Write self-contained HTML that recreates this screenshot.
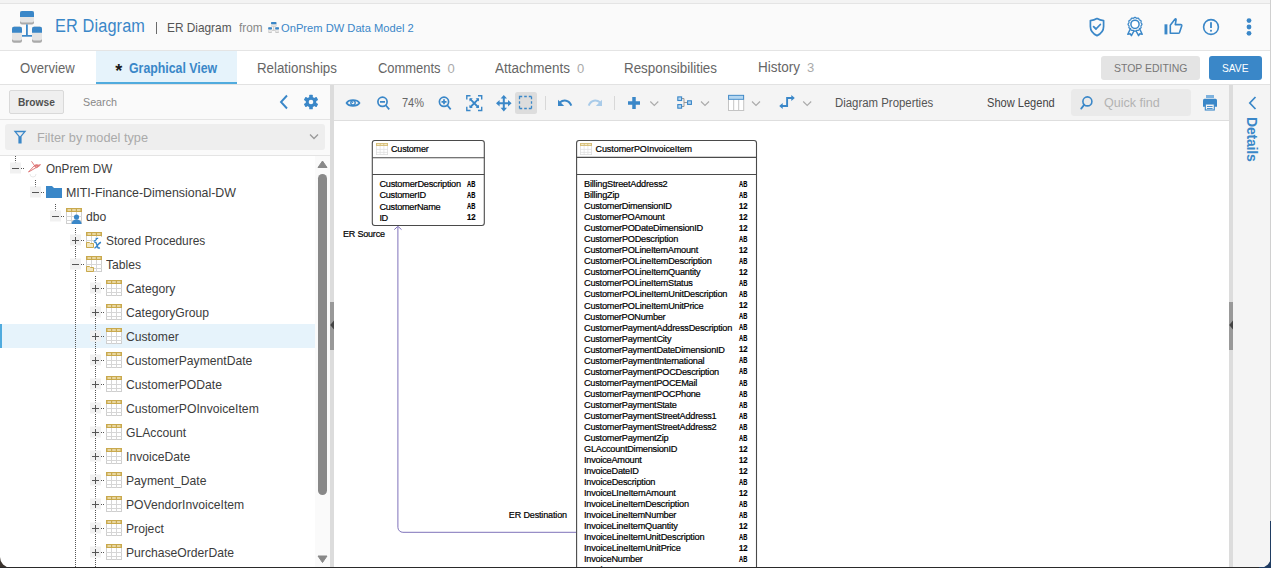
<!DOCTYPE html>
<html><head><meta charset="utf-8">
<style>
*{box-sizing:border-box;margin:0;padding:0}
html,body{width:1271px;height:568px;overflow:hidden;background:#fff;font-family:"Liberation Sans",sans-serif;color:#555;position:relative}
.a{position:absolute}
.t{position:absolute;white-space:nowrap;line-height:1}
svg{position:absolute;overflow:visible}
.ti{position:absolute;width:16px;height:16px}
</style></head><body>
<div class="a" style="left:0;top:0;width:1271px;height:3px;background:#f3f3f3"></div>
<div class="a" style="left:0;top:3px;width:1271px;height:1px;background:#e4e4e4"></div>
<div class="a" style="left:0;top:4px;width:1271px;height:46px;background:#fafafa"></div>
<div class="a" style="left:0;top:50px;width:1271px;height:1px;background:#e4e4e4"></div>
<div class="a" style="left:0;top:51px;width:1271px;height:33px;background:#fff"></div>
<div class="a" style="left:96px;top:51px;width:141px;height:33px;background:#e6f3fb"></div>
<div class="a" style="left:96px;top:82px;width:141px;height:2px;background:#50abde"></div>
<div class="a" style="left:0;top:84px;width:1271px;height:1px;background:#e2e2e2"></div>
<div class="a" style="left:0;top:85px;width:330px;height:34px;background:#fafafa"></div>
<div class="a" style="left:0;top:119px;width:330px;height:1px;background:#e4e4e4"></div>
<div class="a" style="left:0;top:120px;width:330px;height:35px;background:#fafafa"></div>
<div class="a" style="left:5px;top:124px;width:320px;height:26px;background:#eeeeee;border-radius:3px"></div>
<div class="a" style="left:0;top:155px;width:330px;height:1px;background:#e4e4e4"></div>
<div class="a" style="left:315px;top:156px;width:15px;height:412px;background:#fafafa"></div>
<div class="a" style="left:330px;top:85px;width:4px;height:483px;background:#dcdcdc"></div>
<div class="a" style="left:330px;top:302px;width:4px;height:48px;background:#999"></div>
<div class="a" style="left:1229px;top:85px;width:4px;height:483px;background:#dcdcdc"></div>
<div class="a" style="left:1229px;top:302px;width:4px;height:48px;background:#999"></div>
<div class="a" style="left:334px;top:85px;width:895px;height:35px;background:#f4f4f4"></div>
<div class="a" style="left:334px;top:120px;width:895px;height:1px;background:#dedede"></div>
<div class="a" style="left:1233px;top:85px;width:38px;height:483px;background:#f4f4f4"></div>
<div class="a" style="left:1270px;top:0;width:1px;height:568px;background:#d0d0d0"></div>
<svg style="left:0;top:0" width="60" height="50">
<rect x="20" y="11" width="14" height="13.4" rx="2" fill="#a9a9a9"/>
<rect x="20" y="11" width="14" height="11.5" rx="2" fill="#e4e4e4"/>
<path d="M22 11h10a2 2 0 0 1 2 2v4h-14v-4a2 2 0 0 1 2-2z" fill="#3a87c8"/>
<rect x="12" y="26.8" width="10" height="15.9" rx="2" fill="#a9a9a9"/>
<rect x="12" y="26.8" width="10" height="13.8" rx="2" fill="#e4e4e4"/>
<path d="M14 26.8h6a2 2 0 0 1 2 2v4h-10v-4a2 2 0 0 1 2-2z" fill="#3a87c8"/>
<rect x="32" y="26.8" width="10" height="15.9" rx="2" fill="#a9a9a9"/>
<rect x="32" y="26.8" width="10" height="13.8" rx="2" fill="#e4e4e4"/>
<path d="M34 26.8h6a2 2 0 0 1 2 2v4h-10v-4a2 2 0 0 1 2-2z" fill="#3a87c8"/>
<rect x="26" y="24.4" width="1.8" height="11.5" fill="#3a87c8"/>
<rect x="22" y="35" width="10" height="1.7" fill="#3a87c8"/>
</svg>
<div class="a" style="left:156px;top:22px;width:1px;height:12px;background:#6a6a6a"></div>
<svg style="left:262px;top:18px" width="20" height="18">
<rect x="9" y="4" width="5.4" height="4.6" rx="0.8" fill="#b5b5b5"/><rect x="9" y="4" width="5.4" height="4" rx="0.8" fill="#e6e6e6"/><rect x="9" y="4" width="5.4" height="2.2" rx="0.8" fill="#3a87c8"/>
<rect x="6.2" y="9.2" width="3.8" height="5.6" rx="0.8" fill="#b5b5b5"/><rect x="6.2" y="9.2" width="3.8" height="4.8" rx="0.8" fill="#e6e6e6"/><rect x="6.2" y="9.2" width="3.8" height="2.3" rx="0.8" fill="#3a87c8"/>
<rect x="13.2" y="9.2" width="3.8" height="5.6" rx="0.8" fill="#b5b5b5"/><rect x="13.2" y="9.2" width="3.8" height="4.8" rx="0.8" fill="#e6e6e6"/><rect x="13.2" y="9.2" width="3.8" height="2.3" rx="0.8" fill="#3a87c8"/>
<path d="M11.7 8.6V12.3M10 12.3H13.2" stroke="#bbb" stroke-width="0.8"/>
</svg>
<div class="a" style="left:1101px;top:56px;width:99px;height:24px;background:#e4e4e4;border-radius:3px"></div>
<div class="a" style="left:1209px;top:56px;width:53px;height:24px;background:#3a87c8;border-radius:3px"></div>
<svg style="left:1088px;top:17px" width="18" height="20" viewBox="0 0 18 20">
<path d="M9 1.6 C6.5 3 4.5 3.4 2.4 3.6 V9.5 C2.4 14 5 16.8 9 18.6 C13 16.8 15.6 14 15.6 9.5 V3.6 C13.5 3.4 11.5 3 9 1.6z" fill="none" stroke="#3a87c8" stroke-width="1.7" stroke-linejoin="round"/>
<path d="M5.6 9.6 L8 12 L12.3 7.5" fill="none" stroke="#3a87c8" stroke-width="1.8" stroke-linecap="round" stroke-linejoin="round"/>
</svg>
<svg style="left:1126px;top:16px" width="18" height="22" viewBox="0 0 18 22">
<path d="M4.5 12.5 L1.8 18.2 L4.3 17.8 L5.4 19.6 L8.2 14.5" fill="none" stroke="#3a87c8" stroke-width="1.5" stroke-linejoin="round"/>
<path d="M13.5 12.5 L16.2 18.2 L13.7 17.8 L12.6 19.6 L9.8 14.5" fill="none" stroke="#3a87c8" stroke-width="1.5" stroke-linejoin="round"/>
<path d="M9.00 1.35 L9.18 1.37 L9.36 1.43 L9.53 1.52 L9.70 1.63 L9.86 1.76 L10.02 1.89 L10.17 2.01 L10.31 2.12 L10.46 2.21 L10.62 2.26 L10.78 2.29 L10.95 2.29 L11.13 2.27 L11.33 2.24 L11.53 2.20 L11.73 2.17 L11.93 2.16 L12.12 2.17 L12.31 2.21 L12.47 2.28 L12.62 2.39 L12.75 2.53 L12.85 2.69 L12.94 2.87 L13.02 3.06 L13.09 3.25 L13.15 3.44 L13.23 3.61 L13.31 3.75 L13.42 3.88 L13.55 3.99 L13.69 4.07 L13.86 4.15 L14.05 4.21 L14.24 4.28 L14.43 4.36 L14.61 4.45 L14.77 4.55 L14.91 4.68 L15.02 4.83 L15.09 4.99 L15.13 5.18 L15.14 5.37 L15.13 5.57 L15.10 5.77 L15.06 5.97 L15.03 6.17 L15.01 6.35 L15.01 6.52 L15.04 6.68 L15.09 6.84 L15.18 6.99 L15.29 7.13 L15.41 7.28 L15.54 7.44 L15.67 7.60 L15.78 7.77 L15.87 7.94 L15.93 8.12 L15.95 8.30 L15.93 8.48 L15.87 8.66 L15.78 8.83 L15.67 9.00 L15.54 9.16 L15.41 9.32 L15.29 9.47 L15.18 9.61 L15.09 9.76 L15.04 9.92 L15.01 10.08 L15.01 10.25 L15.03 10.43 L15.06 10.63 L15.10 10.83 L15.13 11.03 L15.14 11.23 L15.13 11.42 L15.09 11.61 L15.02 11.77 L14.91 11.92 L14.77 12.05 L14.61 12.15 L14.43 12.24 L14.24 12.32 L14.05 12.39 L13.86 12.45 L13.69 12.53 L13.55 12.61 L13.42 12.72 L13.31 12.85 L13.23 12.99 L13.15 13.16 L13.09 13.35 L13.02 13.54 L12.94 13.73 L12.85 13.91 L12.75 14.07 L12.62 14.21 L12.47 14.32 L12.31 14.39 L12.12 14.43 L11.93 14.44 L11.73 14.43 L11.53 14.40 L11.33 14.36 L11.13 14.33 L10.95 14.31 L10.78 14.31 L10.62 14.34 L10.46 14.39 L10.31 14.48 L10.17 14.59 L10.02 14.71 L9.86 14.84 L9.70 14.97 L9.53 15.08 L9.36 15.17 L9.18 15.23 L9.00 15.25 L8.82 15.23 L8.64 15.17 L8.47 15.08 L8.30 14.97 L8.14 14.84 L7.98 14.71 L7.83 14.59 L7.69 14.48 L7.54 14.39 L7.38 14.34 L7.22 14.31 L7.05 14.31 L6.87 14.33 L6.67 14.36 L6.47 14.40 L6.27 14.43 L6.07 14.44 L5.88 14.43 L5.69 14.39 L5.53 14.32 L5.38 14.21 L5.25 14.07 L5.15 13.91 L5.06 13.73 L4.98 13.54 L4.91 13.35 L4.85 13.16 L4.77 12.99 L4.69 12.85 L4.58 12.72 L4.45 12.61 L4.31 12.53 L4.14 12.45 L3.95 12.39 L3.76 12.32 L3.57 12.24 L3.39 12.15 L3.23 12.05 L3.09 11.92 L2.98 11.78 L2.91 11.61 L2.87 11.42 L2.86 11.23 L2.87 11.03 L2.90 10.83 L2.94 10.63 L2.97 10.43 L2.99 10.25 L2.99 10.08 L2.96 9.92 L2.91 9.76 L2.82 9.61 L2.71 9.47 L2.59 9.32 L2.46 9.16 L2.33 9.00 L2.22 8.83 L2.13 8.66 L2.07 8.48 L2.05 8.30 L2.07 8.12 L2.13 7.94 L2.22 7.77 L2.33 7.60 L2.46 7.44 L2.59 7.28 L2.71 7.13 L2.82 6.99 L2.91 6.84 L2.96 6.68 L2.99 6.52 L2.99 6.35 L2.97 6.17 L2.94 5.97 L2.90 5.77 L2.87 5.57 L2.86 5.37 L2.87 5.18 L2.91 4.99 L2.98 4.83 L3.09 4.68 L3.23 4.55 L3.39 4.45 L3.57 4.36 L3.76 4.28 L3.95 4.21 L4.14 4.15 L4.31 4.07 L4.45 3.99 L4.58 3.88 L4.69 3.75 L4.77 3.61 L4.85 3.44 L4.91 3.25 L4.98 3.06 L5.06 2.87 L5.15 2.69 L5.25 2.53 L5.38 2.39 L5.53 2.28 L5.69 2.21 L5.88 2.17 L6.07 2.16 L6.27 2.17 L6.47 2.20 L6.67 2.24 L6.87 2.27 L7.05 2.29 L7.22 2.29 L7.38 2.26 L7.54 2.21 L7.69 2.12 L7.83 2.01 L7.98 1.89 L8.14 1.76 L8.30 1.63 L8.47 1.52 L8.64 1.43 L8.82 1.37 L9.00 1.35Z" fill="#fafafa" stroke="#3a87c8" stroke-width="1.25"/>
<circle cx="9" cy="8.3" r="4.1" fill="#fff" stroke="#3a87c8" stroke-width="1.5"/>
</svg>
<svg style="left:1162.5px;top:17px" width="22" height="19" viewBox="0 0 22 19">
<rect x="1.5" y="7.3" width="2.9" height="10.1" fill="#3a87c8"/>
<path d="M7.3 8.3 L11.9 2.3 Q12.9 1.1 13.1 2.6 L12.3 7.6 H17.7 Q19.1 7.6 18.7 9 L16.5 15.5 Q16.2 16.3 15.3 16.3 H7.3 Z" fill="none" stroke="#3a87c8" stroke-width="1.6" stroke-linejoin="round"/>
</svg>
<svg style="left:1200px;top:16px" width="22" height="22" viewBox="0 0 22 22">
<circle cx="11" cy="11" r="7.4" fill="none" stroke="#3a87c8" stroke-width="1.6"/>
<rect x="10.1" y="6.2" width="1.8" height="5.8" fill="#3a87c8"/>
<rect x="10.1" y="13.8" width="1.8" height="1.8" fill="#3a87c8"/>
</svg>
<svg style="left:1244px;top:16px" width="10" height="22" viewBox="0 0 10 22">
<circle cx="5" cy="4.6" r="2.4" fill="#3a87c8"/><circle cx="5" cy="11" r="2.4" fill="#3a87c8"/><circle cx="5" cy="17.3" r="2.4" fill="#3a87c8"/>
</svg>
<div class="a" style="left:9px;top:90px;width:55px;height:24px;background:#efefef;border:1px solid #d9d9d9;border-radius:2px"></div>
<svg style="left:278px;top:94px" width="12" height="16"><path d="M9 1.5 L3 8 L9 14.5" fill="none" stroke="#3a87c8" stroke-width="1.9"/></svg>
<svg style="left:303px;top:94px" width="16" height="16" viewBox="0 0 16 16">
<g fill="#3a87c8" transform="translate(8 8)">
<circle r="5.3"/>
<rect x="-1.8" y="-7.3" width="3.6" height="14.6" rx="0.6"/>
<rect x="-1.8" y="-7.3" width="3.6" height="14.6" rx="0.6" transform="rotate(60)"/>
<rect x="-1.8" y="-7.3" width="3.6" height="14.6" rx="0.6" transform="rotate(120)"/>
</g><circle cx="8" cy="8" r="2.3" fill="#fafafa"/>
</svg>
<svg style="left:12px;top:129px" width="16" height="16" viewBox="0 0 16 16">
<path d="M1.6 1.8 H14.4 L9.6 7.6 V14.6 H6.4 V7.6 Z M4.4 3.3 L8 7.4 L11.6 3.3 Z" fill="#3a87c8" fill-rule="evenodd"/>
</svg>
<svg style="left:309px;top:133px" width="10" height="8"><path d="M1 1.5 L5 5.5 L9 1.5" fill="none" stroke="#999" stroke-width="1.3"/></svg>
<svg style="left:0;top:0;width:0;height:0"><defs>
<symbol id="tbl" viewBox="0 0 16 16">
<rect x="0.5" y="0.5" width="15" height="15" fill="#fff" stroke="#cfcfcf"/>
<path d="M5.5 4V16M10.5 4V16M0 8.5H16M0 12.5H16" stroke="#d6d6d6" stroke-width="1"/>
<rect x="0" y="0" width="16" height="4" fill="#c9a94d"/>
<rect x="1.5" y="1.2" width="3.5" height="1.6" fill="#efe3b8"/>
<rect x="6.2" y="1.2" width="3.6" height="1.6" fill="#efe3b8"/>
<rect x="11" y="1.2" width="3.5" height="1.6" fill="#efe3b8"/>
</symbol>
<symbol id="tblp" viewBox="0 0 16 16">
<rect x="0.5" y="0.5" width="15" height="15" fill="#fff" stroke="#cfcfcf"/>
<path d="M5.5 4V16M10.5 4V16M0 8.5H16M0 12.5H16" stroke="#d6d6d6" stroke-width="1"/>
<rect x="0" y="0" width="16" height="4" fill="#c9a94d"/>
<rect x="1.5" y="1.2" width="3.5" height="1.6" fill="#efe3b8"/>
<rect x="6.2" y="1.2" width="3.6" height="1.6" fill="#efe3b8"/>
<rect x="11" y="1.2" width="3.5" height="1.6" fill="#efe3b8"/>
</symbol>
</defs></svg>
<div class="a" style="left:0;top:324px;width:315px;height:24px;background:#e6f3fb"></div>
<div class="a" style="left:0;top:324px;width:2px;height:24px;background:#50abde"></div>
<svg style="left:0;top:156px" width="315" height="412">
<path d="M15.5 0V6.5" stroke="#555" stroke-width="1" stroke-dasharray="1 1"/>
<path d="M35.5 24V31" stroke="#555" stroke-width="1" stroke-dasharray="1 1"/>
<path d="M55.5 48V55" stroke="#555" stroke-width="1" stroke-dasharray="1 1"/>
<path d="M75.5 72V412" stroke="#555" stroke-width="1" stroke-dasharray="1 1"/>
<path d="M95.5 120V412" stroke="#555" stroke-width="1" stroke-dasharray="1 1"/>
<rect x="10" y="6.5" width="11" height="11" fill="#f1f1f1"/>
<path d="M12 12.5H19" stroke="#555" stroke-width="1"/>
<path d="M21 12.5H25" stroke="#555" stroke-width="1" stroke-dasharray="1 1"/>
<g transform="translate(27 3.5)" fill="none" stroke="#dc6f6f" stroke-width="0.9"><path d="M1.5 12.5 L7 6.5 L13.5 5.2 L8.5 8.5 Z"/><path d="M4.5 1.8 L8 6.8 L12.5 6.5"/><circle cx="9.5" cy="6.6" r="1.6"/><path d="M3 14.5a3 3 0 0 0 6 0" stroke="#e6e6e6"/></g>
<rect x="30" y="30.5" width="11" height="11" fill="#f1f1f1"/>
<path d="M32 36.5H39" stroke="#555" stroke-width="1"/>
<path d="M41 36.5H45" stroke="#555" stroke-width="1" stroke-dasharray="1 1"/>
<path d="M46 30h6l2 2h8v10h-16z" fill="#3a87c8"/>
<rect x="50" y="54.5" width="11" height="11" fill="#f1f1f1"/>
<path d="M52 60.5H59" stroke="#555" stroke-width="1"/>
<path d="M61 60.5H65" stroke="#555" stroke-width="1" stroke-dasharray="1 1"/>
<use href="#tbl" x="66" y="52" width="16" height="16"/>
<circle cx="76.5" cy="61" r="2.6" fill="#3a87c8"/>
<path d="M71.5 68c0-3 2.2-4.6 5-4.6s5 1.6 5 4.6z" fill="#3a87c8"/>
<rect x="70" y="78.5" width="11" height="11" fill="#f1f1f1"/>
<path d="M72 84.5H79" stroke="#555" stroke-width="1"/>
<path d="M75.5 81V88" stroke="#555" stroke-width="1"/>
<path d="M81 84.5H85" stroke="#555" stroke-width="1" stroke-dasharray="1 1"/>
<use href="#tbl" x="86" y="76" width="16" height="16"/>
<rect x="93" y="81" width="9" height="11" fill="#fff"/>
<path d="M86.5 86.5h3l1 1h3v4h-7z" fill="#f3e7bf" stroke="#c9a94d" stroke-width="1"/>
<path d="M94.2 86.3c1.2-0.4 1.9 0 2.4 1.6l1.1 3.2c0.4 1 1 1.2 2.2 0.7M101 86.2c-1.2 0.3-2.4 1.6-3.6 3.2l-1.5 1.9c-0.4 0.5-0.9 0.6-1.5 0.4" fill="none" stroke="#3a87c8" stroke-width="1.5"/>
<path d="M93.5 85.2c1.5-0.3 2.5-1 3.2-2.2M95.6 82.4h2.6" fill="none" stroke="#3a87c8" stroke-width="1.3"/>
<rect x="70" y="102.5" width="11" height="11" fill="#f1f1f1"/>
<path d="M72 108.5H79" stroke="#555" stroke-width="1"/>
<path d="M81 108.5H85" stroke="#555" stroke-width="1" stroke-dasharray="1 1"/>
<use href="#tbl" x="86" y="100" width="16" height="16"/>
<path d="M86.5 110.5h3l1 1h3v4h-7z" fill="#f3e7bf" stroke="#c9a94d" stroke-width="1"/>
<rect x="90" y="126.5" width="11" height="11" fill="#f1f1f1"/>
<path d="M92 132.5H99" stroke="#555" stroke-width="1"/>
<path d="M95.5 129V136" stroke="#555" stroke-width="1"/>
<path d="M101 132.5H105" stroke="#555" stroke-width="1" stroke-dasharray="1 1"/>
<use href="#tbl" x="106" y="124" width="16" height="16"/>
<rect x="90" y="150.5" width="11" height="11" fill="#f1f1f1"/>
<path d="M92 156.5H99" stroke="#555" stroke-width="1"/>
<path d="M95.5 153V160" stroke="#555" stroke-width="1"/>
<path d="M101 156.5H105" stroke="#555" stroke-width="1" stroke-dasharray="1 1"/>
<use href="#tbl" x="106" y="148" width="16" height="16"/>
<rect x="90" y="174.5" width="11" height="11" fill="#f1f1f1"/>
<path d="M92 180.5H99" stroke="#555" stroke-width="1"/>
<path d="M95.5 177V184" stroke="#555" stroke-width="1"/>
<path d="M101 180.5H105" stroke="#555" stroke-width="1" stroke-dasharray="1 1"/>
<use href="#tbl" x="106" y="172" width="16" height="16"/>
<rect x="90" y="198.5" width="11" height="11" fill="#f1f1f1"/>
<path d="M92 204.5H99" stroke="#555" stroke-width="1"/>
<path d="M95.5 201V208" stroke="#555" stroke-width="1"/>
<path d="M101 204.5H105" stroke="#555" stroke-width="1" stroke-dasharray="1 1"/>
<use href="#tbl" x="106" y="196" width="16" height="16"/>
<rect x="90" y="222.5" width="11" height="11" fill="#f1f1f1"/>
<path d="M92 228.5H99" stroke="#555" stroke-width="1"/>
<path d="M95.5 225V232" stroke="#555" stroke-width="1"/>
<path d="M101 228.5H105" stroke="#555" stroke-width="1" stroke-dasharray="1 1"/>
<use href="#tbl" x="106" y="220" width="16" height="16"/>
<rect x="90" y="246.5" width="11" height="11" fill="#f1f1f1"/>
<path d="M92 252.5H99" stroke="#555" stroke-width="1"/>
<path d="M95.5 249V256" stroke="#555" stroke-width="1"/>
<path d="M101 252.5H105" stroke="#555" stroke-width="1" stroke-dasharray="1 1"/>
<use href="#tbl" x="106" y="244" width="16" height="16"/>
<rect x="90" y="270.5" width="11" height="11" fill="#f1f1f1"/>
<path d="M92 276.5H99" stroke="#555" stroke-width="1"/>
<path d="M95.5 273V280" stroke="#555" stroke-width="1"/>
<path d="M101 276.5H105" stroke="#555" stroke-width="1" stroke-dasharray="1 1"/>
<use href="#tbl" x="106" y="268" width="16" height="16"/>
<rect x="90" y="294.5" width="11" height="11" fill="#f1f1f1"/>
<path d="M92 300.5H99" stroke="#555" stroke-width="1"/>
<path d="M95.5 297V304" stroke="#555" stroke-width="1"/>
<path d="M101 300.5H105" stroke="#555" stroke-width="1" stroke-dasharray="1 1"/>
<use href="#tbl" x="106" y="292" width="16" height="16"/>
<rect x="90" y="318.5" width="11" height="11" fill="#f1f1f1"/>
<path d="M92 324.5H99" stroke="#555" stroke-width="1"/>
<path d="M95.5 321V328" stroke="#555" stroke-width="1"/>
<path d="M101 324.5H105" stroke="#555" stroke-width="1" stroke-dasharray="1 1"/>
<use href="#tbl" x="106" y="316" width="16" height="16"/>
<rect x="90" y="342.5" width="11" height="11" fill="#f1f1f1"/>
<path d="M92 348.5H99" stroke="#555" stroke-width="1"/>
<path d="M95.5 345V352" stroke="#555" stroke-width="1"/>
<path d="M101 348.5H105" stroke="#555" stroke-width="1" stroke-dasharray="1 1"/>
<use href="#tbl" x="106" y="340" width="16" height="16"/>
<rect x="90" y="366.5" width="11" height="11" fill="#f1f1f1"/>
<path d="M92 372.5H99" stroke="#555" stroke-width="1"/>
<path d="M95.5 369V376" stroke="#555" stroke-width="1"/>
<path d="M101 372.5H105" stroke="#555" stroke-width="1" stroke-dasharray="1 1"/>
<use href="#tbl" x="106" y="364" width="16" height="16"/>
<rect x="90" y="390.5" width="11" height="11" fill="#f1f1f1"/>
<path d="M92 396.5H99" stroke="#555" stroke-width="1"/>
<path d="M95.5 393V400" stroke="#555" stroke-width="1"/>
<path d="M101 396.5H105" stroke="#555" stroke-width="1" stroke-dasharray="1 1"/>
<use href="#tbl" x="106" y="388" width="16" height="16"/>
<rect x="90" y="414.5" width="11" height="11" fill="#f1f1f1"/>
<path d="M92 420.5H99" stroke="#555" stroke-width="1"/>
<path d="M95.5 417V424" stroke="#555" stroke-width="1"/>
<path d="M101 420.5H105" stroke="#555" stroke-width="1" stroke-dasharray="1 1"/>
<use href="#tbl" x="106" y="412" width="16" height="16"/>
</svg>
<svg style="left:315px;top:156px" width="15" height="412"><path d="M3 11.5 L7.5 5 L12 11.5 Z" fill="#888" stroke="#888" stroke-width="1" stroke-linejoin="round"/><rect x="3" y="18" width="9" height="321" rx="4.5" fill="#888"/><path d="M3 400 L7.5 406.5 L12 400 Z" fill="#888" stroke="#888" stroke-width="1" stroke-linejoin="round"/></svg>
<svg style="left:0;top:0" width="1271" height="130">
<path d="M346.5 103 C349 99.2 357 99.2 359.5 103 C357 106.8 349 106.8 346.5 103 Z" fill="none" stroke="#3a87c8" stroke-width="1.6"/>
<circle cx="353" cy="102.8" r="2.2" fill="none" stroke="#3a87c8" stroke-width="1.4"/><circle cx="352.5" cy="102.3" r="0.7" fill="#3a87c8"/>
<circle cx="382.5" cy="101.8" r="4.6" fill="none" stroke="#3a87c8" stroke-width="1.7"/><path d="M380 101.8h5M385.8 105.2L389.2 109.4" stroke="#3a87c8" stroke-width="1.7"/>
<circle cx="444" cy="101.8" r="4.6" fill="none" stroke="#3a87c8" stroke-width="1.7"/><path d="M441.5 101.8h5M444 99.3v5M447.3 105.2L450.7 109.4" stroke="#3a87c8" stroke-width="1.7"/>
<path d="M466.8 99.5V95.8H470.5M478 95.8H481.7V99.5M481.7 106.8V110.5H478M470.5 110.5H466.8V106.8" fill="none" stroke="#3a87c8" stroke-width="1.4"/>
<path d="M470 98.8L478.5 107.5M478.5 98.8L470 107.5" stroke="#3a87c8" stroke-width="1.8"/><path d="M469.5 98.3h3.3l-3.3 3.3zM479 98.3h-3.3l3.3 3.3zM469.5 108h3.3l-3.3-3.3zM479 108h-3.3l3.3-3.3z" fill="#3a87c8"/>
<path d="M503.8 97V109.5M497.5 103.2H510" stroke="#3a87c8" stroke-width="2"/><path d="M503.8 95L500.6 98.6H507zM503.8 111.4L500.6 107.8H507zM496 103.2L499.6 100V106.4zM511.6 103.2L508 100V106.4z" fill="#3a87c8"/>
<rect x="515" y="92" width="22" height="22" rx="2.5" fill="#dddddd"/>
<path d="M519.5 96.5H531.5V108.5H519.5Z" fill="none" stroke="#3a87c8" stroke-width="1.3" stroke-dasharray="2.7 2 2.6 2 2.7 0"/>
<path d="M545.5 96V110M614.5 96V110" stroke="#d8d8d8" stroke-width="1"/>
<path d="M559.8 102.5 C563.5 99.3 569.2 99.8 571.3 105.6" fill="none" stroke="#3a87c8" stroke-width="2"/><path d="M558 99.8V106H564.2Z" fill="#3a87c8"/>
<path d="M600.2 102.5 C596.5 99.3 590.8 99.8 588.7 105.6" fill="none" stroke="#a9cbe9" stroke-width="2"/><path d="M602 99.8V106H595.8Z" fill="#a9cbe9"/>
<path d="M634 97V109M628 103H640" stroke="#3a87c8" stroke-width="3.5"/>
<path d="M650.3 101.5L654.3 105.5L658.3 101.5" fill="none" stroke="#aaa" stroke-width="1.1"/>
<path d="M701 101.5L705 105.5L709 101.5" fill="none" stroke="#aaa" stroke-width="1.1"/>
<path d="M752 101.5L756 105.5L760 101.5" fill="none" stroke="#aaa" stroke-width="1.1"/>
<path d="M803.2 101.5L807.2 105.5L811.2 101.5" fill="none" stroke="#aaa" stroke-width="1.1"/>
<path d="M681.5 98.5H684V106.5H681.5M684 102.5H687" fill="none" stroke="#999" stroke-width="1"/>
<rect x="677.8" y="96.9" width="3.8" height="3.6" fill="#b9d8f0" stroke="#3a87c8" stroke-width="1.1"/><rect x="677.8" y="104.6" width="3.8" height="3.6" fill="#b9d8f0" stroke="#3a87c8" stroke-width="1.1"/><rect x="687.6" y="100.8" width="3.8" height="3.6" fill="#b9d8f0" stroke="#3a87c8" stroke-width="1.1"/>
<rect x="728.5" y="95.5" width="15.2" height="15" fill="#fff" stroke="#c4c4c4"/><path d="M733.7 99.5V110.5M738.7 99.5V110.5" stroke="#c4c4c4" stroke-width="1"/>
<rect x="728.6" y="95.3" width="15" height="4" fill="#b5d7f1" stroke="#3a87c8" stroke-width="0.9"/>
<path d="M781.5 106H787.1V98H792" fill="none" stroke="#3a87c8" stroke-width="1.9"/><path d="M779.2 106L782.7 103V109Z M794.8 98L791.3 95V101Z" fill="#3a87c8"/>
<rect x="1071" y="89" width="120" height="27" rx="3.5" fill="#eaeaea"/>
<circle cx="1087.4" cy="101.4" r="4.5" fill="none" stroke="#3a87c8" stroke-width="1.6"/><path d="M1084.3 104.6L1081.2 108.6" stroke="#3a87c8" stroke-width="1.8" stroke-linecap="round"/>
<rect x="1206" y="95" width="8" height="3" fill="#7eb2de"/><path d="M1203 100.2a1.5 1.5 0 0 1 1.5-1.5h11a1.5 1.5 0 0 1 1.5 1.5v6.5h-14z" fill="#3a87c8"/><rect x="1205.3" y="104" width="9" height="6" fill="#f4f4f4" stroke="#3a87c8" stroke-width="1.1"/><path d="M1207 106.5h5.6M1207 108.5h5.6" stroke="#3a87c8" stroke-width="0.9"/>
<path d="M1255.5 97L1249.8 103L1255.5 109" fill="none" stroke="#3a87c8" stroke-width="1.7"/>
</svg>
<svg style="left:330px;top:320px" width="4" height="10"><path d="M4 0.5L0.2 5L4 9.5Z" fill="#444"/></svg>
<svg style="left:1229px;top:320px" width="4" height="10"><path d="M4 0.5L0.2 5L4 9.5Z" fill="#444"/></svg>
<div class="t" style="left:1245px;top:117px;font-size:14px;font-weight:700;color:#3a87c8;transform:rotate(90deg);transform-origin:0 0;left:1259px;letter-spacing:-0.2px">Details</div>
<svg style="left:0;top:0" width="1271" height="568">
<path d="M397.9 227V527.3a5 5 0 0 0 5 5H576.4" fill="none" stroke="#7f72ba" stroke-width="1"/>
<path d="M394.3 229.6L397.9 226.3L401.5 229.6" fill="none" stroke="#7f72ba" stroke-width="1"/>
<rect x="372.3" y="140.5" width="112" height="85" rx="2.5" fill="#fff" stroke="#4a4a4a" stroke-width="1.1"/>
<path d="M372.3 157.7H484.3M372.3 174.5H484.3" stroke="#4a4a4a" stroke-width="1.1"/>
<use href="#tbl" x="376" y="143" width="12" height="12" opacity="0.75"/>
<path d="M576.6 580V143a2.5 2.5 0 0 1 2.5-2.5H754a2.5 2.5 0 0 1 2.5 2.5V580" fill="#fff" stroke="#4a4a4a" stroke-width="1.1"/>
<path d="M576.6 157.4H756.5M576.6 174.5H756.5" stroke="#4a4a4a" stroke-width="1.1"/>
<use href="#tbl" x="580" y="143" width="12" height="12" opacity="0.75"/>
</svg>
<div class="t" style="left:54.5px;top:16.76px;font-size:18px;color:#3a87c8;transform:scaleX(0.905);transform-origin:0 0;letter-spacing:0.15px">ER Diagram</div>
<div class="t" style="left:167px;top:21.30px;font-size:13px;color:#555;transform:scaleX(0.9111);transform-origin:0 0;">ER Diagram</div>
<div class="t" style="left:239px;top:22.14px;font-size:12px;color:#888;transform:scaleX(0.9833);transform-origin:0 0;">from</div>
<div class="t" style="left:281px;top:22.55px;font-size:11.4px;color:#3a87c8;transform:scaleX(0.9796);transform-origin:0 0;">OnPrem DW Data Model 2</div>
<div class="t" style="left:20.4px;top:61.15px;font-size:14px;color:#666;transform:scaleX(0.9373);transform-origin:0 0;">Overview</div>
<div class="t" style="left:115.3px;top:62.06px;font-size:18px;color:#1a1a1a;font-weight:700;">*</div>
<div class="t" style="left:128.6px;top:61.15px;font-size:14px;color:#3a87c8;font-weight:700;transform:scaleX(0.8809);transform-origin:0 0;">Graphical View</div>
<div class="t" style="left:257px;top:61.15px;font-size:14px;color:#666;transform:scaleX(0.9505);transform-origin:0 0;">Relationships</div>
<div class="t" style="left:378px;top:60.65px;font-size:14px;color:#666;transform:scaleX(0.9248);transform-origin:0 0;">Comments</div>
<div class="t" style="left:447.5px;top:61.50px;font-size:13px;color:#aaa;">0</div>
<div class="t" style="left:495.1px;top:60.65px;font-size:14px;color:#666;transform:scaleX(0.9624);transform-origin:0 0;">Attachments</div>
<div class="t" style="left:577px;top:61.50px;font-size:13px;color:#aaa;">0</div>
<div class="t" style="left:624px;top:61.15px;font-size:14px;color:#666;transform:scaleX(0.9560);transform-origin:0 0;">Responsibilities</div>
<div class="t" style="left:758px;top:60.15px;font-size:14px;color:#666;transform:scaleX(0.9641);transform-origin:0 0;">History</div>
<div class="t" style="left:807px;top:61.00px;font-size:13px;color:#aaa;">3</div>
<div class="t" style="left:1114px;top:62.69px;font-size:11px;color:#777;transform:scaleX(0.9516);transform-origin:0 0;">STOP EDITING</div>
<div class="t" style="left:1222px;top:62.69px;font-size:11px;color:#fff;transform:scaleX(0.9288);transform-origin:0 0;">SAVE</div>
<div class="t" style="left:18px;top:96.57px;font-size:11.5px;color:#505050;font-weight:700;transform:scaleX(0.8857);transform-origin:0 0;">Browse</div>
<div class="t" style="left:83px;top:96.69px;font-size:11px;color:#888;transform:scaleX(0.9753);transform-origin:0 0;">Search</div>
<div class="t" style="left:37px;top:130.70px;font-size:13px;color:#aaa;transform:scaleX(0.9785);transform-origin:0 0;">Filter by model type</div>
<div class="t" style="left:46px;top:162.00px;font-size:13px;color:#3c3c3c;transform:scaleX(0.8999);transform-origin:0 0;">OnPrem DW</div>
<div class="t" style="left:66px;top:186.00px;font-size:13px;color:#3c3c3c;transform:scaleX(0.9528);transform-origin:0 0;">MITI-Finance-Dimensional-DW</div>
<div class="t" style="left:86px;top:210.00px;font-size:13px;color:#3c3c3c;transform:scaleX(0.9350);transform-origin:0 0;">dbo</div>
<div class="t" style="left:106px;top:234.00px;font-size:13px;color:#3c3c3c;transform:scaleX(0.9160);transform-origin:0 0;">Stored Procedures</div>
<div class="t" style="left:106px;top:258.00px;font-size:13px;color:#3c3c3c;transform:scaleX(0.9350);transform-origin:0 0;">Tables</div>
<div class="t" style="left:126px;top:282.00px;font-size:13px;color:#3c3c3c;transform:scaleX(0.9350);transform-origin:0 0;">Category</div>
<div class="t" style="left:126px;top:306.00px;font-size:13px;color:#3c3c3c;transform:scaleX(0.9350);transform-origin:0 0;">CategoryGroup</div>
<div class="t" style="left:126px;top:330.00px;font-size:13px;color:#3c3c3c;transform:scaleX(0.9350);transform-origin:0 0;">Customer</div>
<div class="t" style="left:126px;top:354.00px;font-size:13px;color:#3c3c3c;transform:scaleX(0.9350);transform-origin:0 0;">CustomerPaymentDate</div>
<div class="t" style="left:126px;top:378.00px;font-size:13px;color:#3c3c3c;transform:scaleX(0.9350);transform-origin:0 0;">CustomerPODate</div>
<div class="t" style="left:126px;top:402.00px;font-size:13px;color:#3c3c3c;transform:scaleX(0.9378);transform-origin:0 0;">CustomerPOInvoiceItem</div>
<div class="t" style="left:126px;top:426.00px;font-size:13px;color:#3c3c3c;transform:scaleX(0.9350);transform-origin:0 0;">GLAccount</div>
<div class="t" style="left:126px;top:450.00px;font-size:13px;color:#3c3c3c;transform:scaleX(0.9350);transform-origin:0 0;">InvoiceDate</div>
<div class="t" style="left:126px;top:474.00px;font-size:13px;color:#3c3c3c;transform:scaleX(0.9350);transform-origin:0 0;">Payment_Date</div>
<div class="t" style="left:126px;top:498.00px;font-size:13px;color:#3c3c3c;transform:scaleX(0.9350);transform-origin:0 0;">POVendorInvoiceItem</div>
<div class="t" style="left:126px;top:522.00px;font-size:13px;color:#3c3c3c;transform:scaleX(0.9350);transform-origin:0 0;">Project</div>
<div class="t" style="left:126px;top:546.00px;font-size:13px;color:#3c3c3c;transform:scaleX(0.9350);transform-origin:0 0;">PurchaseOrderDate</div>
<div class="t" style="left:126px;top:570.00px;font-size:13px;color:#3c3c3c;transform:scaleX(0.9350);transform-origin:0 0;">Vendor</div>
<div class="t" style="left:402px;top:97.14px;font-size:12px;color:#666;transform:scaleX(0.9155);transform-origin:0 0;">74%</div>
<div class="t" style="left:835.4px;top:97.14px;font-size:12px;color:#555;transform:scaleX(0.9499);transform-origin:0 0;">Diagram Properties</div>
<div class="t" style="left:987px;top:97.14px;font-size:12px;color:#444;transform:scaleX(0.9223);transform-origin:0 0;">Show Legend</div>
<div class="t" style="left:1103.5px;top:96.00px;font-size:13px;color:#b3b3b3;transform:scaleX(0.9635);transform-origin:0 0;">Quick find</div>
<div class="t" style="left:391px;top:145.28px;font-size:9px;color:#000;letter-spacing:-0.188px;-webkit-text-stroke:0.2px #000;">Customer</div>
<div class="t" style="left:595.5px;top:145.28px;font-size:9px;color:#000;letter-spacing:-0.072px;-webkit-text-stroke:0.2px #000;">CustomerPOInvoiceItem</div>
<div class="t" style="left:379.4px;top:180.31px;font-size:9.2px;color:#000;letter-spacing:-0.229px;-webkit-text-stroke:0.2px #000;">CustomerDescription</div>
<div class="t" style="left:467.3px;top:180.08px;font-size:9px;color:#000;font-weight:700;-webkit-text-stroke:0.2px #000;transform:scaleX(0.64);transform-origin:0 0;">AB</div>
<div class="t" style="left:379.4px;top:191.41px;font-size:9.2px;color:#000;letter-spacing:-0.261px;-webkit-text-stroke:0.2px #000;">CustomerID</div>
<div class="t" style="left:467.3px;top:191.18px;font-size:9px;color:#000;font-weight:700;-webkit-text-stroke:0.2px #000;transform:scaleX(0.64);transform-origin:0 0;">AB</div>
<div class="t" style="left:379.4px;top:202.51px;font-size:9.2px;color:#000;letter-spacing:-0.281px;-webkit-text-stroke:0.2px #000;">CustomerName</div>
<div class="t" style="left:467.3px;top:202.28px;font-size:9px;color:#000;font-weight:700;-webkit-text-stroke:0.2px #000;transform:scaleX(0.64);transform-origin:0 0;">AB</div>
<div class="t" style="left:379.4px;top:213.61px;font-size:9.2px;color:#000;letter-spacing:-0.441px;-webkit-text-stroke:0.2px #000;">ID</div>
<div class="t" style="left:467.3px;top:213.38px;font-size:9px;color:#000;font-weight:700;-webkit-text-stroke:0.2px #000;transform:scaleX(0.86);transform-origin:0 0;">12</div>
<div class="t" style="left:584px;top:180.11px;font-size:9.2px;color:#000;letter-spacing:-0.211px;-webkit-text-stroke:0.2px #000;">BillingStreetAddress2</div>
<div class="t" style="left:739.0px;top:179.88px;font-size:9px;color:#000;font-weight:700;-webkit-text-stroke:0.2px #000;transform:scaleX(0.64);transform-origin:0 0;">AB</div>
<div class="t" style="left:584px;top:191.15px;font-size:9.2px;color:#000;letter-spacing:-0.199px;-webkit-text-stroke:0.2px #000;">BillingZip</div>
<div class="t" style="left:739.0px;top:190.92px;font-size:9px;color:#000;font-weight:700;-webkit-text-stroke:0.2px #000;transform:scaleX(0.64);transform-origin:0 0;">AB</div>
<div class="t" style="left:584px;top:202.18px;font-size:9.2px;color:#000;letter-spacing:-0.246px;-webkit-text-stroke:0.2px #000;">CustomerDimensionID</div>
<div class="t" style="left:739.0px;top:201.95px;font-size:9px;color:#000;font-weight:700;-webkit-text-stroke:0.2px #000;transform:scaleX(0.86);transform-origin:0 0;">12</div>
<div class="t" style="left:584px;top:213.22px;font-size:9.2px;color:#000;letter-spacing:-0.271px;-webkit-text-stroke:0.2px #000;">CustomerPOAmount</div>
<div class="t" style="left:739.0px;top:212.99px;font-size:9px;color:#000;font-weight:700;-webkit-text-stroke:0.2px #000;transform:scaleX(0.86);transform-origin:0 0;">12</div>
<div class="t" style="left:584px;top:224.25px;font-size:9.2px;color:#000;letter-spacing:-0.250px;-webkit-text-stroke:0.2px #000;">CustomerPODateDimensionID</div>
<div class="t" style="left:739.0px;top:224.02px;font-size:9px;color:#000;font-weight:700;-webkit-text-stroke:0.2px #000;transform:scaleX(0.86);transform-origin:0 0;">12</div>
<div class="t" style="left:584px;top:235.29px;font-size:9.2px;color:#000;letter-spacing:-0.238px;-webkit-text-stroke:0.2px #000;">CustomerPODescription</div>
<div class="t" style="left:739.0px;top:235.06px;font-size:9px;color:#000;font-weight:700;-webkit-text-stroke:0.2px #000;transform:scaleX(0.64);transform-origin:0 0;">AB</div>
<div class="t" style="left:584px;top:246.32px;font-size:9.2px;color:#000;letter-spacing:-0.250px;-webkit-text-stroke:0.2px #000;">CustomerPOLineItemAmount</div>
<div class="t" style="left:739.0px;top:246.09px;font-size:9px;color:#000;font-weight:700;-webkit-text-stroke:0.2px #000;transform:scaleX(0.86);transform-origin:0 0;">12</div>
<div class="t" style="left:584px;top:257.36px;font-size:9.2px;color:#000;letter-spacing:-0.230px;-webkit-text-stroke:0.2px #000;">CustomerPOLineItemDescription</div>
<div class="t" style="left:739.0px;top:257.13px;font-size:9px;color:#000;font-weight:700;-webkit-text-stroke:0.2px #000;transform:scaleX(0.64);transform-origin:0 0;">AB</div>
<div class="t" style="left:584px;top:268.39px;font-size:9.2px;color:#000;letter-spacing:-0.235px;-webkit-text-stroke:0.2px #000;">CustomerPOLineItemQuantity</div>
<div class="t" style="left:739.0px;top:268.16px;font-size:9px;color:#000;font-weight:700;-webkit-text-stroke:0.2px #000;transform:scaleX(0.86);transform-origin:0 0;">12</div>
<div class="t" style="left:584px;top:279.43px;font-size:9.2px;color:#000;letter-spacing:-0.239px;-webkit-text-stroke:0.2px #000;">CustomerPOLineItemStatus</div>
<div class="t" style="left:739.0px;top:279.20px;font-size:9px;color:#000;font-weight:700;-webkit-text-stroke:0.2px #000;transform:scaleX(0.64);transform-origin:0 0;">AB</div>
<div class="t" style="left:584px;top:290.46px;font-size:9.2px;color:#000;letter-spacing:-0.226px;-webkit-text-stroke:0.2px #000;">CustomerPOLineItemUnitDescription</div>
<div class="t" style="left:739.0px;top:290.23px;font-size:9px;color:#000;font-weight:700;-webkit-text-stroke:0.2px #000;transform:scaleX(0.64);transform-origin:0 0;">AB</div>
<div class="t" style="left:584px;top:301.50px;font-size:9.2px;color:#000;letter-spacing:-0.232px;-webkit-text-stroke:0.2px #000;">CustomerPOLineItemUnitPrice</div>
<div class="t" style="left:739.0px;top:301.27px;font-size:9px;color:#000;font-weight:700;-webkit-text-stroke:0.2px #000;transform:scaleX(0.86);transform-origin:0 0;">12</div>
<div class="t" style="left:584px;top:312.53px;font-size:9.2px;color:#000;letter-spacing:-0.275px;-webkit-text-stroke:0.2px #000;">CustomerPONumber</div>
<div class="t" style="left:739.0px;top:312.30px;font-size:9px;color:#000;font-weight:700;-webkit-text-stroke:0.2px #000;transform:scaleX(0.64);transform-origin:0 0;">AB</div>
<div class="t" style="left:584px;top:323.57px;font-size:9.2px;color:#000;letter-spacing:-0.234px;-webkit-text-stroke:0.2px #000;">CustomerPaymentAddressDescription</div>
<div class="t" style="left:739.0px;top:323.34px;font-size:9px;color:#000;font-weight:700;-webkit-text-stroke:0.2px #000;transform:scaleX(0.64);transform-origin:0 0;">AB</div>
<div class="t" style="left:584px;top:334.60px;font-size:9.2px;color:#000;letter-spacing:-0.245px;-webkit-text-stroke:0.2px #000;">CustomerPaymentCity</div>
<div class="t" style="left:739.0px;top:334.37px;font-size:9px;color:#000;font-weight:700;-webkit-text-stroke:0.2px #000;transform:scaleX(0.64);transform-origin:0 0;">AB</div>
<div class="t" style="left:584px;top:345.64px;font-size:9.2px;color:#000;letter-spacing:-0.245px;-webkit-text-stroke:0.2px #000;">CustomerPaymentDateDimensionID</div>
<div class="t" style="left:739.0px;top:345.41px;font-size:9px;color:#000;font-weight:700;-webkit-text-stroke:0.2px #000;transform:scaleX(0.86);transform-origin:0 0;">12</div>
<div class="t" style="left:584px;top:356.67px;font-size:9.2px;color:#000;letter-spacing:-0.225px;-webkit-text-stroke:0.2px #000;">CustomerPaymentInternational</div>
<div class="t" style="left:739.0px;top:356.44px;font-size:9px;color:#000;font-weight:700;-webkit-text-stroke:0.2px #000;transform:scaleX(0.64);transform-origin:0 0;">AB</div>
<div class="t" style="left:584px;top:367.71px;font-size:9.2px;color:#000;letter-spacing:-0.243px;-webkit-text-stroke:0.2px #000;">CustomerPaymentPOCDescription</div>
<div class="t" style="left:739.0px;top:367.48px;font-size:9px;color:#000;font-weight:700;-webkit-text-stroke:0.2px #000;transform:scaleX(0.64);transform-origin:0 0;">AB</div>
<div class="t" style="left:584px;top:378.74px;font-size:9.2px;color:#000;letter-spacing:-0.260px;-webkit-text-stroke:0.2px #000;">CustomerPaymentPOCEMail</div>
<div class="t" style="left:739.0px;top:378.51px;font-size:9px;color:#000;font-weight:700;-webkit-text-stroke:0.2px #000;transform:scaleX(0.64);transform-origin:0 0;">AB</div>
<div class="t" style="left:584px;top:389.78px;font-size:9.2px;color:#000;letter-spacing:-0.267px;-webkit-text-stroke:0.2px #000;">CustomerPaymentPOCPhone</div>
<div class="t" style="left:739.0px;top:389.55px;font-size:9px;color:#000;font-weight:700;-webkit-text-stroke:0.2px #000;transform:scaleX(0.64);transform-origin:0 0;">AB</div>
<div class="t" style="left:584px;top:400.81px;font-size:9.2px;color:#000;letter-spacing:-0.246px;-webkit-text-stroke:0.2px #000;">CustomerPaymentState</div>
<div class="t" style="left:739.0px;top:400.58px;font-size:9px;color:#000;font-weight:700;-webkit-text-stroke:0.2px #000;transform:scaleX(0.64);transform-origin:0 0;">AB</div>
<div class="t" style="left:584px;top:411.85px;font-size:9.2px;color:#000;letter-spacing:-0.239px;-webkit-text-stroke:0.2px #000;">CustomerPaymentStreetAddress1</div>
<div class="t" style="left:739.0px;top:411.62px;font-size:9px;color:#000;font-weight:700;-webkit-text-stroke:0.2px #000;transform:scaleX(0.64);transform-origin:0 0;">AB</div>
<div class="t" style="left:584px;top:422.88px;font-size:9.2px;color:#000;letter-spacing:-0.239px;-webkit-text-stroke:0.2px #000;">CustomerPaymentStreetAddress2</div>
<div class="t" style="left:739.0px;top:422.65px;font-size:9px;color:#000;font-weight:700;-webkit-text-stroke:0.2px #000;transform:scaleX(0.64);transform-origin:0 0;">AB</div>
<div class="t" style="left:584px;top:433.92px;font-size:9.2px;color:#000;letter-spacing:-0.251px;-webkit-text-stroke:0.2px #000;">CustomerPaymentZip</div>
<div class="t" style="left:739.0px;top:433.69px;font-size:9px;color:#000;font-weight:700;-webkit-text-stroke:0.2px #000;transform:scaleX(0.64);transform-origin:0 0;">AB</div>
<div class="t" style="left:584px;top:444.95px;font-size:9.2px;color:#000;letter-spacing:-0.248px;-webkit-text-stroke:0.2px #000;">GLAccountDimensionID</div>
<div class="t" style="left:739.0px;top:444.72px;font-size:9px;color:#000;font-weight:700;-webkit-text-stroke:0.2px #000;transform:scaleX(0.86);transform-origin:0 0;">12</div>
<div class="t" style="left:584px;top:455.99px;font-size:9.2px;color:#000;letter-spacing:-0.243px;-webkit-text-stroke:0.2px #000;">InvoiceAmount</div>
<div class="t" style="left:739.0px;top:455.76px;font-size:9px;color:#000;font-weight:700;-webkit-text-stroke:0.2px #000;transform:scaleX(0.86);transform-origin:0 0;">12</div>
<div class="t" style="left:584px;top:467.02px;font-size:9.2px;color:#000;letter-spacing:-0.231px;-webkit-text-stroke:0.2px #000;">InvoiceDateID</div>
<div class="t" style="left:739.0px;top:466.79px;font-size:9px;color:#000;font-weight:700;-webkit-text-stroke:0.2px #000;transform:scaleX(0.86);transform-origin:0 0;">12</div>
<div class="t" style="left:584px;top:478.06px;font-size:9.2px;color:#000;letter-spacing:-0.212px;-webkit-text-stroke:0.2px #000;">InvoiceDescription</div>
<div class="t" style="left:739.0px;top:477.83px;font-size:9px;color:#000;font-weight:700;-webkit-text-stroke:0.2px #000;transform:scaleX(0.64);transform-origin:0 0;">AB</div>
<div class="t" style="left:584px;top:489.09px;font-size:9.2px;color:#000;letter-spacing:-0.232px;-webkit-text-stroke:0.2px #000;">InvoiceLIneItemAmount</div>
<div class="t" style="left:739.0px;top:488.86px;font-size:9px;color:#000;font-weight:700;-webkit-text-stroke:0.2px #000;transform:scaleX(0.86);transform-origin:0 0;">12</div>
<div class="t" style="left:584px;top:500.13px;font-size:9.2px;color:#000;letter-spacing:-0.212px;-webkit-text-stroke:0.2px #000;">InvoiceLineItemDescription</div>
<div class="t" style="left:739.0px;top:499.90px;font-size:9px;color:#000;font-weight:700;-webkit-text-stroke:0.2px #000;transform:scaleX(0.64);transform-origin:0 0;">AB</div>
<div class="t" style="left:584px;top:511.16px;font-size:9.2px;color:#000;letter-spacing:-0.233px;-webkit-text-stroke:0.2px #000;">InvoiceLineItemNumber</div>
<div class="t" style="left:739.0px;top:510.93px;font-size:9px;color:#000;font-weight:700;-webkit-text-stroke:0.2px #000;transform:scaleX(0.64);transform-origin:0 0;">AB</div>
<div class="t" style="left:584px;top:522.20px;font-size:9.2px;color:#000;letter-spacing:-0.215px;-webkit-text-stroke:0.2px #000;">InvoiceLineItemQuantity</div>
<div class="t" style="left:739.0px;top:521.97px;font-size:9px;color:#000;font-weight:700;-webkit-text-stroke:0.2px #000;transform:scaleX(0.86);transform-origin:0 0;">12</div>
<div class="t" style="left:584px;top:533.23px;font-size:9.2px;color:#000;letter-spacing:-0.210px;-webkit-text-stroke:0.2px #000;">InvoiceLineItemUnitDescription</div>
<div class="t" style="left:739.0px;top:533.00px;font-size:9px;color:#000;font-weight:700;-webkit-text-stroke:0.2px #000;transform:scaleX(0.64);transform-origin:0 0;">AB</div>
<div class="t" style="left:584px;top:544.27px;font-size:9.2px;color:#000;letter-spacing:-0.212px;-webkit-text-stroke:0.2px #000;">InvoiceLineItemUnitPrice</div>
<div class="t" style="left:739.0px;top:544.04px;font-size:9px;color:#000;font-weight:700;-webkit-text-stroke:0.2px #000;transform:scaleX(0.86);transform-origin:0 0;">12</div>
<div class="t" style="left:584px;top:555.30px;font-size:9.2px;color:#000;letter-spacing:-0.247px;-webkit-text-stroke:0.2px #000;">InvoiceNumber</div>
<div class="t" style="left:739.0px;top:555.07px;font-size:9px;color:#000;font-weight:700;-webkit-text-stroke:0.2px #000;transform:scaleX(0.64);transform-origin:0 0;">AB</div>
<div class="t" style="left:584px;top:566.34px;font-size:9.2px;color:#000;letter-spacing:-0.221px;-webkit-text-stroke:0.2px #000;">InvoiceStatus</div>
<div class="t" style="left:739.0px;top:566.11px;font-size:9px;color:#000;font-weight:700;-webkit-text-stroke:0.2px #000;transform:scaleX(0.64);transform-origin:0 0;">AB</div>
<div class="t" style="left:343px;top:229.98px;font-size:9px;color:#000;letter-spacing:-0.191px;-webkit-text-stroke:0.2px #000;">ER Source</div>
<div class="t" style="left:508.8px;top:511.38px;font-size:9px;color:#000;letter-spacing:-0.133px;-webkit-text-stroke:0.2px #000;">ER Destination</div>
<div class="a" style="left:0;top:567px;width:1271px;height:1px;background:#2a2a2a"></div>
<div class="a" style="left:1270px;top:521px;width:1px;height:47px;background:#1f3c62"></div>
<svg style="left:0;top:556px" width="12" height="12"><path d="M0 1 A10.5 10.5 0 0 0 10.5 11.5 L0 11.5 Z" fill="#3b342e"/><rect x="0" y="11" width="12" height="1" fill="#2a2a2a"/></svg>
<svg style="left:1259px;top:556px" width="12" height="12"><path d="M12 1 A10.5 10.5 0 0 1 1.5 11.5 L12 11.5 Z" fill="#1f3c62"/><rect x="0" y="11" width="12" height="1" fill="#1f3c62"/></svg>
</body></html>
